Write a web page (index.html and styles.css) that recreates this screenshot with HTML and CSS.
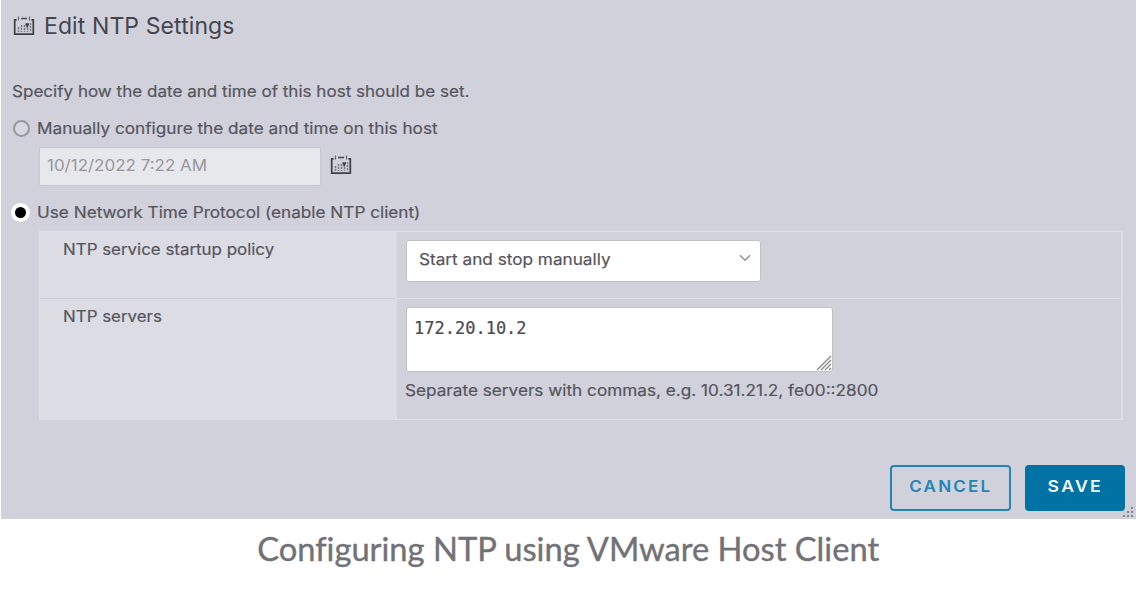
FILE: index.html
```html
<!DOCTYPE html>
<html lang="en">
<head>
<meta charset="utf-8">
<title>Edit NTP Settings</title>
<link rel="stylesheet" href="styles.css">
</head>
<body>
<svg width="0" height="0" class="defs">
  <symbol id="calendar" viewBox="0 0 22 20">
    <path d="M3.6 3.8H1.7V18.2H20.3V3.8H18.4" fill="none" stroke="#3f3f46" stroke-width="1.7"/>
    <path d="M8 2.5H14" fill="none" stroke="#4c4c54" stroke-width="1.6"/>
    <path d="M5.5 .5V4.5M16.5 .5V4.5" stroke="#65656d" stroke-width="1.2"/>
    <path d="M8.5 9V16M11.5 9V16M14.5 9V16M17.5 7V16M5.5 11V16" stroke="#7b7b84" stroke-width="1.5" stroke-dasharray="2.2 .8" fill="none"/>
    <path d="M12.5 7.2h3.4v2.2h-1v2h-1.4v-2h-1z" fill="#3c3c43"/>
  </symbol>
</svg>
<main class="dialog">
  <header class="title"><svg class="cal" viewBox="0 0 22 20"><use href="#calendar"/></svg><h1>Edit NTP Settings</h1></header>
  <p class="intro"><span>Specify how the date and time of this host should be set.</span></p>
  <div class="option manual"><span class="radio"></span><span class="t-manual">Manually configure the date and time on this host</span></div>
  <div class="daterow"><div class="date"><span>10/12/2022 7:22 AM</span></div><svg class="cal" viewBox="0 0 22 20"><use href="#calendar"/></svg></div>
  <div class="option ntp"><span class="radio checked"></span><span class="t-ntp">Use Network Time Protocol (enable NTP client)</span></div>
  <section class="grid">
    <div class="label"><span class="t-policy">NTP service startup policy</span></div>
    <div class="value"><div class="select"><span>Start and stop manually</span><svg width="12" height="8" viewBox="0 0 12 8"><path d="M1 1.2L6 6.2L11 1.2" fill="none" stroke="#929296" stroke-width="1.5"/></svg></div></div>
    <div class="label"><span class="t-servers">NTP servers</span></div>
    <div class="value"><div class="area"><span>172.20.10.2</span><svg width="16" height="16" viewBox="0 0 16 16"><path d="M1 15L15 1M5 15L15 5M9 15L15 9M13 15L15 13" stroke="#858585" stroke-width="1.3"/></svg></div><div class="hint"><span>Separate servers with commas, e.g. 10.31.21.2, fe00::2800</span></div></div>
  </section>
  <footer class="actions"><div class="btn cancel"><span>CANCEL</span></div><div class="btn save"><span>SAVE</span></div></footer>
  <svg class="grip" width="12" height="11" viewBox="0 0 12 11"><path d="M9 0h2v2H9zM9 4h2v2H9zM5 4h2v2H5zM1 8h2v2H1zM5 8h2v2H5zM9 8h2v2H9z" fill="#85858c"/></svg>
</main>
<div class="caption"><span>Configuring NTP using VMware Host Client</span></div>
</body>
</html>
```
FILE: styles.css
```css
* { box-sizing: border-box; }
body { margin: 0; width: 1136px; height: 594px; overflow: hidden; background: #fff; color: #56565d; font: 400 15.5px/20px Inter, "Liberation Sans", sans-serif; }
.defs { position: absolute; }
span { display: inline-block; white-space: nowrap; transform: scaleX(1.108); transform-origin: 0 50%; -webkit-text-stroke: .2px currentColor; }
.dialog { position: relative; height: 519px; margin-left: 1px; padding: 14px 11px 0 12px; background: #d1d1dc; }
.title { display: flex; align-items: center; gap: 9px; height: 24px; }
.cal { width: 22px; height: 20px; }
h1 { margin: 0; font-size: 23px; line-height: 24px; font-weight: 400; color: #45454c; white-space: nowrap; letter-spacing: .1px; }
.intro { margin: 44px 0 0; height: 20px; }
.intro span { transform: scaleX(1.1); margin-left: -1px; }
.option { display: flex; align-items: center; height: 20px; gap: 7px; }
.manual { margin-top: 17px; }
.option .radio { width: 17px; height: 17px; margin-top: -1px; border: 2px solid #97979e; border-radius: 50%; background: #d7d7e0; transform: none; }
.option .checked { margin-left: -1px; margin-right: 1px; border: 3px solid #fff; background: #000; box-shadow: 0 0 0 1px #fff; }
.daterow { display: flex; align-items: center; gap: 9px; height: 39px; margin: 8px 0 0 26px; }
.daterow .cal { margin-top: -4px; }
.date { width: 282px; height: 39px; padding: 8px 7px; border: 1px solid #c7c7ce; border-radius: 2px; background: #e7e8ec; color: #97979d; }
.date span { transform: scaleX(1.095); -webkit-text-stroke: 0; }
.ntp { margin-top: 17px; }
.grid { display: grid; grid-template-columns: 356px 1fr; grid-template-rows: 66px 121px; width: 1084px; margin: 8px 0 0 26px; border: 1px solid #dedee6; border-width: 1px 2px 1px 1px; }
.label { padding: 7px 23px; background: #dcdde4; border-top: 1px solid #cecfd8; }
.label:nth-child(3) { padding-top: 8px; }
.label:first-child { border-top-color: #dcdde4; }
.label span { transform: scaleX(1.09); }
.value { padding: 8px 0 0 9px; border-left: 1px solid #dedee6; }
.value:last-child { border-top: 1px solid #dedee6; }
.select { display: flex; justify-content: space-between; width: 355px; height: 42px; padding: 9px 9px 0 12px; border: 1px solid #c2c2c6; border-radius: 3px; background: #fff; }
.select svg { margin-top: 4px; }
.area { display: flex; justify-content: space-between; width: 427px; height: 65px; padding: 10px 0 0 7px; border: 1px solid #c2c2c6; border-radius: 3px; background: #fff; font: 17px/20px "DejaVu Sans Mono", monospace; color: #49494f; }
.area span { transform: none; }
.area svg { align-self: flex-end; }
.hint { margin: 9px 0 0 -1px; }
.actions { display: flex; justify-content: flex-end; gap: 14px; margin: 45px 0 0; }
.btn { display: flex; justify-content: center; width: 121px; height: 46px; padding-top: 10px; border: 2px solid #2385b4; border-radius: 4px; color: #2385b4; font-weight: 600; letter-spacing: 2px; }
.btn span { transform: scaleX(1.1); transform-origin: 50% 50%; -webkit-text-stroke: 0; }
.save { width: 100px; background: #0072a3; border-color: #0072a3; color: #f1f7fa; }
.save span { transform: scaleX(1.14); }
.grip { position: absolute; right: 2px; bottom: 1px; }
.caption { display: flex; justify-content: center; padding-top: 9px; font: 400 33px/40px Lato, sans-serif; color: #727276; font-variant-ligatures: none; }
.caption span { transform: scaleX(.99); transform-origin: 50% 50%; -webkit-text-stroke: .4px #727276; }
```
